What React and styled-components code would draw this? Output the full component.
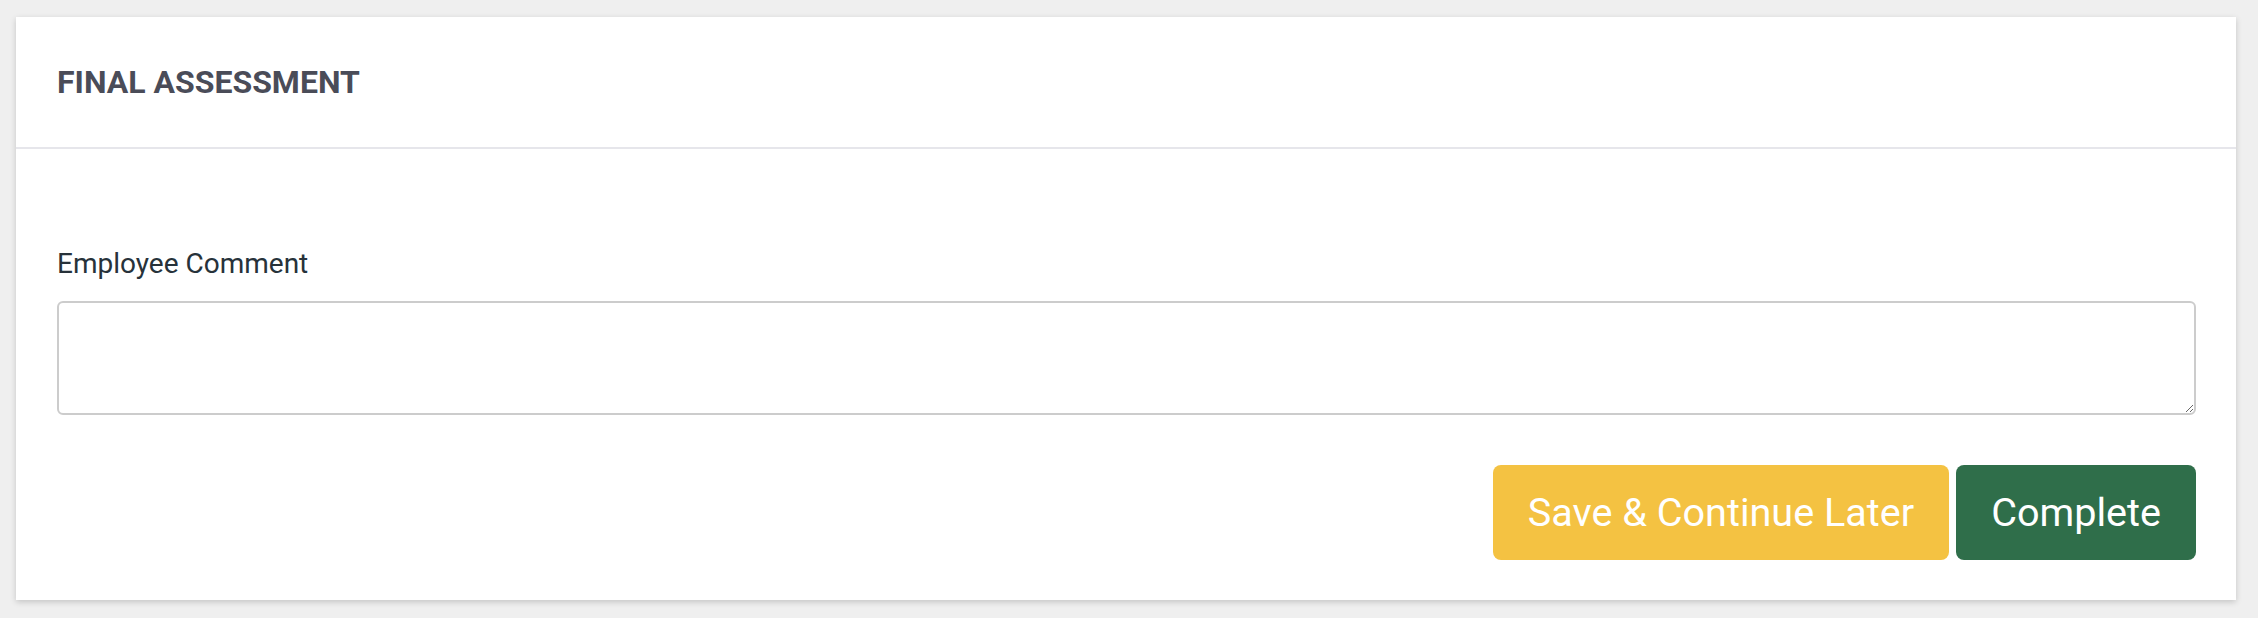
import React from 'react';
import styled, { createGlobalStyle } from 'styled-components';

const GlobalStyle = createGlobalStyle`
  html, body {
    margin: 0;
    padding: 0;
    background: #efefef;
    font-family: Roboto, "Liberation Sans", Arial, sans-serif;
  }
`;

const Page = styled.div`
  padding: 17px 22px 16px 16px;
`;

const Card = styled.section`
  background: #fff;
  box-shadow: 0 2px 6px rgba(0, 0, 0, 0.18);
`;

const CardHeader = styled.header`
  display: flex;
  align-items: center;
  height: 130px;
  padding: 0 41px;
  border-bottom: 2px solid #e6e6eb;
`;

const Title = styled.h2`
  margin: 0;
  font-size: 32px;
  font-weight: 700;
  color: #4a4c58;
`;

const CardBody = styled.div`
  padding: 97px 40px 40px 41px;
`;

const Label = styled.label`
  display: block;
  font-size: 28px;
  line-height: 36px;
  color: #27323a;
  margin-bottom: 19px;
`;

const TextArea = styled.textarea`
  display: block;
  box-sizing: border-box;
  width: 100%;
  height: 114px;
  margin: 0;
  padding: 12px 16px;
  border: 2px solid #cccccc;
  border-radius: 6px;
  font-family: inherit;
  font-size: 28px;
  outline: 0;
`;

const Actions = styled.div`
  display: flex;
  justify-content: flex-end;
  gap: 7px;
  margin-top: 50px;
`;

const Button = styled.button`
  height: 95px;
  padding: 0 35px;
  border: 0;
  border-radius: 8px;
  background: ${({ $tone }) => ($tone === 'warn' ? '#f4c242' : '#2f6e4a')};
  color: #fff;
  font-family: inherit;
  font-size: 39.6px;
  cursor: pointer;
`;

export default function App() {
  return (
    <Page>
      <GlobalStyle />
      <Card>
        <CardHeader>
          <Title>FINAL ASSESSMENT</Title>
        </CardHeader>
        <CardBody>
          <Label htmlFor="employee-comment">Employee Comment</Label>
          <TextArea id="employee-comment" />
          <Actions>
            <Button $tone="warn">Save &amp; Continue Later</Button>
            <Button $tone="ok">Complete</Button>
          </Actions>
        </CardBody>
      </Card>
    </Page>
  );
}
